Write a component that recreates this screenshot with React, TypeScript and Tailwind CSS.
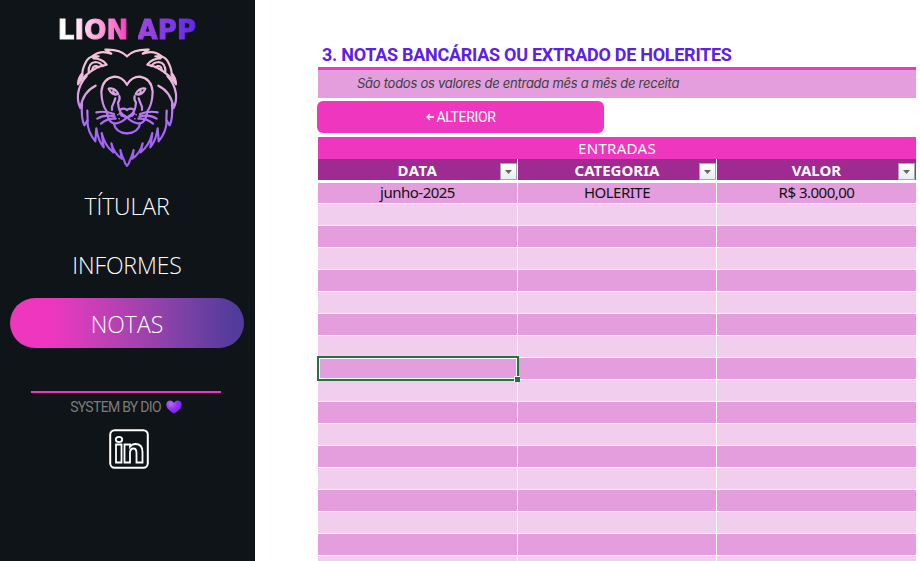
import React from "react";

const maneHalf = [
  "M171 37 Q150 15 106 17 L124 29 Q90 16 66 38 L86 37",
  "M80 38 Q58 35 49 52 Q38 72 37 88 Q25 101 24 120 Q45 90 84 69 L110 62 Q96 43 70 43",
  "M56 84 Q55 56 76 54 Q91 55 98 66 M67 77 Q68 65 79 66 L86 70",
  "M38 92 Q32 105 24 121 M50 96 Q28 120 24 150 Q22 174 31 192 Q39 143 77 125",
  "M36 180 Q33 224 43 244 L52 229 Q52 263 76 292 L79 253 Q84 289 101 310 L95 267 Q105 306 130 325 L124 298 Q132 329 155 344 L151 318 Q157 339 162 348 Q164 358 171 365",
  "M52 200 L53 231",
  "M171 122 Q157 98 133 98 Q98 103 94 143 Q95 182 110 202 Q115 240 139 238 Q158 235 171 220",
  "M116 134 Q134 130 145 150 Q127 157 116 134 M131 138 Q127 147 136 150",
  "M148 156 Q151 166 144 176 Q145 190 149 200 M136 163 Q132 176 126 188 L126 198",
  "M171 198 Q163 190 150 197 Q149 205 158 211 L171 220 M171 220 Q156 217 149 208",
  "M131 237 Q137 267 171 268",
  "M79 205 Q105 200 132 210 M82 224 Q104 210 134 217 M93 239 Q112 222 137 224",
];

function Lion() {
  return (
    <svg className="h-[126px] w-[115px]" viewBox="0 0 345 378" fill="none">
      <defs>
        <linearGradient id="mane" gradientUnits="userSpaceOnUse" x1="0" y1="15" x2="0" y2="365">
          <stop offset="0" stopColor="#f5c5d6" />
          <stop offset=".28" stopColor="#edb9dc" />
          <stop offset=".62" stopColor="#a96af7" />
          <stop offset="1" stopColor="#9d5cf5" />
        </linearGradient>
      </defs>
      {["", "translate(342 0) scale(-1 1)"].map((t) => (
        <g key={t} transform={t} stroke="url(#mane)" strokeWidth="6.500" strokeLinejoin="round" strokeLinecap="round">
          {maneHalf.map((d) => (
            <path key={d} d={d} />
          ))}
          <path strokeWidth="4.500" d="M143 212h1M154 216h1M147 224h1" />
        </g>
      ))}
    </svg>
  );
}

function Heart() {
  return (
    <svg className="h-[14px] w-4" viewBox="0 0 16 14">
      <defs>
        <radialGradient id="heart" cx=".3" cy=".25" r=".8">
          <stop offset="0" stopColor="#b46bff" />
          <stop offset=".5" stopColor="#9333f5" />
          <stop offset="1" stopColor="#7422d8" />
        </radialGradient>
      </defs>
      <path fill="url(#heart)" d="M8 13.6C4 11.5.3 8.3.3 4.6.3 2.200 2 .6 4.200.6 6 .6 7.300 1.500 8 3 8.700 1.500 10 .6 11.800.6c2.200 0 3.900 1.600 3.900 4C15.700 8.300 12 11.500 8 13.600z" />
    </svg>
  );
}

function LinkedIn() {
  return (
    <svg className="h-10 w-10" viewBox="0 0 40 40" fill="none" stroke="#fff">
      <rect x="1.200" y="1.200" width="37.600" height="37.600" rx="4.500" strokeWidth="2" />
      <g strokeWidth="1.800">
        <ellipse cx="10" cy="10.500" rx="3.200" ry="2.600" />
        <path d="M7 15.500h5.500v18H7zM15.500 15.500h5.500v2.300c1.500-2 3.300-2.800 5.500-2.800 4.500 0 7 3 7 8v10.500h-6V24c0-3-1-4.500-3-4.500S21 21 21 24v9.500h-5.500z" />
      </g>
    </svg>
  );
}

function FilterButton({ last }: { last: boolean }) {
  return (
    <span className={(last ? "right-px" : "right-0") + " absolute top-[4px] flex h-[17px] w-[17px] items-center justify-center border border-[#a6a6ae] bg-gradient-to-b from-white to-[#e9edf2]"}>
      <svg className="h-1 w-[7px]" viewBox="0 0 7 4">
        <path d="M0 0h7L3.500 4z" fill="#666" />
      </svg>
    </span>
  );
}

const columns = ["DATA", "CATEGORIA", "VALOR"];
const headerSpacing = ["tracking-[0.5px]", "tracking-[0px]", "tracking-[0px]"];
const first = ["junho-2025", "HOLERITE", "R$ 3.000,00"];
const rows = Array.from({ length: 18 }, (_, i) => i);
const grid = "grid grid-cols-[199px_198px_199px] gap-x-px";

export default function App() {
  return (
    <div className="flex h-[561px] w-[920px] overflow-hidden bg-white">
      <aside className="flex w-[255px] shrink-0 flex-col items-center bg-[#0e1417] pr-px font-['Open_Sans',sans-serif] text-white">
        <h1 className="mt-[15px] flex h-[29px] items-center gap-[9px] whitespace-nowrap font-['DejaVu_Sans',sans-serif] text-[26px] font-bold leading-[32px] tracking-[0.2px] [-webkit-text-stroke:1px_transparent]">
          <span className="bg-gradient-to-r from-white from-15% to-[#f032bd] bg-clip-text text-transparent">LION</span>
          <span className="bg-gradient-to-r from-[#a246e2] to-[#6026ea] bg-clip-text text-transparent">APP</span>
        </h1>
        <div className="pl-px">
          <Lion />
        </div>
        <nav className="mt-[11px] flex w-[234px] flex-col gap-[9px] text-center text-[23px] font-light leading-[50px]">
          <a className="h-[50px] tracking-[-0.1px]">TÍTULAR</a>
          <a className="h-[50px] tracking-[-0.1px]">INFORMES</a>
          <a className="-mt-px h-[50px] rounded-full bg-gradient-to-r from-[#ee36be] from-18% to-[#533b9c] to-95% leading-[53px]">NOTAS</a>
        </nav>
        <div className="mr-[2px] mt-[43px] h-[2px] w-[190px] bg-[#ee36be]" />
        <p className="mr-[2px] mt-[6px] flex h-4 items-center gap-[5px] whitespace-nowrap font-[Roboto,sans-serif] text-[14px] leading-[15px] tracking-[-0.7px] text-[#7c7c7c]">
          SYSTEM BY DIO <Heart />
        </p>
        <div className="mt-[14px] pl-[4px]">
          <LinkedIn />
        </div>
      </aside>
      <main className="ml-[63px] w-[598px] shrink-0">
        <h2 className="h-[67px] whitespace-nowrap pl-1 pt-[44px] font-[Roboto,sans-serif] text-[18px] font-bold leading-[22px] tracking-[-0.27px] text-[#5b21e6]">
          3. NOTAS BANCÁRIAS OU EXTRADO DE HOLERITES
        </h2>
        <p className="h-[31px] whitespace-nowrap border-t-[3px] border-[#ee36be] bg-[#e49edd] pl-[39px] font-[Inter,sans-serif] text-[13px] italic leading-[27px] tracking-[-0.26px] text-[#404040]">
          São todos os valores de entrada mês a mês de receita
        </p>
        <button className="-ml-px mt-[3px] flex h-8 w-[287px] items-center justify-center rounded-[6px] bg-[#ee36be] font-[Roboto,sans-serif] text-[14px] text-white">
          <svg className="mr-[3px] h-2 w-2" viewBox="0 0 8 8" fill="none" stroke="#fff" strokeWidth="1.300">
            <path d="M8 4H1M4 1L1 4l3 3" />
          </svg>
          <span className="tracking-[-0.35px]">ALTERIOR</span>
        </button>
        <section className="mt-1 text-center font-['Noto_Sans',sans-serif] text-[15px] text-[#111]">
          <div className="h-[22px] bg-[#ee36be] leading-[22px] tracking-[0.3px] text-white">ENTRADAS</div>
          <div className={grid + " bg-white font-bold text-white"}>
            {columns.map((c, i) => (
              <div key={c} className={headerSpacing[i] + " relative h-[21px] bg-[#9e2a92] leading-[23px]"}>
                {c}
                <FilterButton last={i === 2} />
              </div>
            ))}
          </div>
          <div className="mt-[3px] flex flex-col gap-px tracking-[-0.5px]">
            {rows.map((r) => (
              <div key={r} className={grid}>
                {first.map((v, c) => (
                  <div key={c} className={(r === 0 ? "h-5 leading-[19px] " : "h-[21px] ") + (r % 2 ? "bg-[#f2ceee]" : "bg-[#e49edd]") + " relative"}>
                    {r === 0 && v}
                    {r === 8 && c === 0 && (
                      <div className="absolute -left-px -right-[2px] -top-[2px] z-10 h-[25px] border-2 border-[#217346]">
                        <div className="h-full border border-white" />
                        <div className="absolute -bottom-[3px] -right-[3px] h-[6px] w-[6px] border-l border-t border-white bg-[#217346]" />
                      </div>
                    )}
                  </div>
                ))}
              </div>
            ))}
          </div>
        </section>
      </main>
    </div>
  );
}
